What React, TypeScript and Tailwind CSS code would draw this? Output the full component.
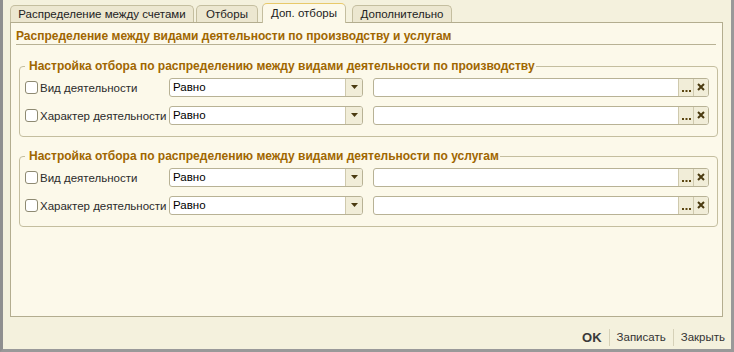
import React from "react";

const ORANGE = "text-[#a06600]";

function Row({ label }: { label: string }) {
  return (
    <div className="flex items-center h-[20px]">
      <div className="w-[13px] h-[13px] ml-[5px] rounded-[3px] border border-[#8e8a72] bg-white shrink-0" />
      <span className="ml-[2px] w-[129px] text-[11.5px] leading-[14px] pt-[1px] text-[#2b2b2b] whitespace-nowrap">{label}</span>
      <div className="flex w-[194px] h-[19px] rounded-[3px] border border-[#b8b295] bg-white overflow-hidden">
        <span className="flex-1 pl-[3px] text-[11.5px] leading-[17px] text-black">Равно</span>
        <div className="w-[17px] border-l border-[#cfc9ad] bg-[#f1edd8] flex items-center justify-center">
          <svg width="7" height="4" viewBox="0 0 7 4"><path d="M0 0h7L3.5 4z" fill="#4a3a10" /></svg>
        </div>
      </div>
      <div className="flex ml-[10px] w-[336px] h-[19px] rounded-[3px] border border-[#b8b295] bg-white overflow-hidden">
        <span className="flex-1" />
        <div className="w-[15px] border-l border-[#cfc9ad] bg-[#f1edd8] flex items-end justify-center pb-[4px]">
          <svg width="9" height="2" viewBox="0 0 9 2"><rect x="0" y="0" width="2" height="2" fill="#5a4510" /><rect x="3.5" y="0" width="2" height="2" fill="#5a4510" /><rect x="7" y="0" width="2" height="2" fill="#5a4510" /></svg>
        </div>
        <div className="w-[15px] border-l border-[#cfc9ad] bg-[#f1edd8] flex items-center justify-center">
          <svg width="8" height="8" viewBox="0 0 8 8"><path d="M1 1L7 7M7 1L1 7" stroke="#4a3a10" strokeWidth="2" /></svg>
        </div>
      </div>
    </div>
  );
}

function Group({ title }: { title: string }) {
  return (
    <fieldset className="ml-[8px] mr-[6px] border border-[#c4be9f] rounded-[4px] pl-[0px] pr-[8px] pt-[4px] pb-[11px]">
      <legend className={`ml-[5px] pl-[4px] pr-[1px] text-[12px] font-bold ${ORANGE} leading-[14px]`}>{title}</legend>
      <div className="flex flex-col gap-[8px]">
        <Row label="Вид деятельности" />
        <Row label="Характер деятельности" />
      </div>
    </fieldset>
  );
}

const tabBase = "rounded-t-[5px] border border-b-0 border-[#c4be9f] text-[11.5px] text-[#222] text-center";

export default function App() {
  const font = { fontFamily: '"Liberation Sans", Arial, sans-serif' };
  return (
    <div style={font} className="w-[734px] h-[352px] flex flex-col bg-[#f4f1dd] border-l-[3px] border-r-[3px] border-b-[3px] border-[#999999] border-l-[#8f8f8f]">
      <div className="flex flex-col flex-1 pl-[7px] pr-[8px]">
        <div className="flex items-end h-[22px]">
          <div className={`${tabBase} w-[184px] h-[17px] leading-[16px] bg-[#ece7d0]`}>Распределение между счетами</div>
          <div className={`${tabBase} ml-[2px] w-[62px] h-[17px] leading-[16px] bg-[#ece7d0]`}>Отборы</div>
          <div className={`${tabBase} ml-[4px] w-[84px] h-[20px] -mb-[1px] leading-[19px] bg-[#fcf9ea] border-t-[#e8c96a] relative z-10`}>Доп. отборы</div>
          <div className={`${tabBase} ml-[6px] w-[100px] h-[17px] leading-[16px] bg-[#ece7d0]`}>Дополнительно</div>
        </div>
        <div className="h-[295px] border border-[#b3ad8f] bg-[#fcf9ea] flex flex-col">
          <div className="ml-[5px] mr-[6px] mt-[6px] border-b border-[#b8b295] text-[12px] leading-[15px]">
            <span className={`font-bold ${ORANGE}`}>Распределение между видами деятельности по производству и услугам</span>
          </div>
          <div className="mt-[14px] flex flex-col gap-[12px]">
            <Group title="Настройка отбора по распределению между видами деятельности по производству" />
            <Group title="Настройка отбора по распределению между видами деятельности по услугам" />
          </div>
        </div>
      </div>
      <div className="h-[33px] flex items-center justify-end pr-[6px] pt-[9px] text-[11.5px] text-[#333]">
        <span className="font-bold text-[13px] text-[#3a3a3a] pr-[7px]">OK</span>
        <span className="w-px h-[17px] bg-[#d6d1b8]" />
        <span className="px-[7px]">Записать</span>
        <span className="w-px h-[17px] bg-[#d6d1b8]" />
        <span className="pl-[7px]">Закрыть</span>
      </div>
    </div>
  );
}
